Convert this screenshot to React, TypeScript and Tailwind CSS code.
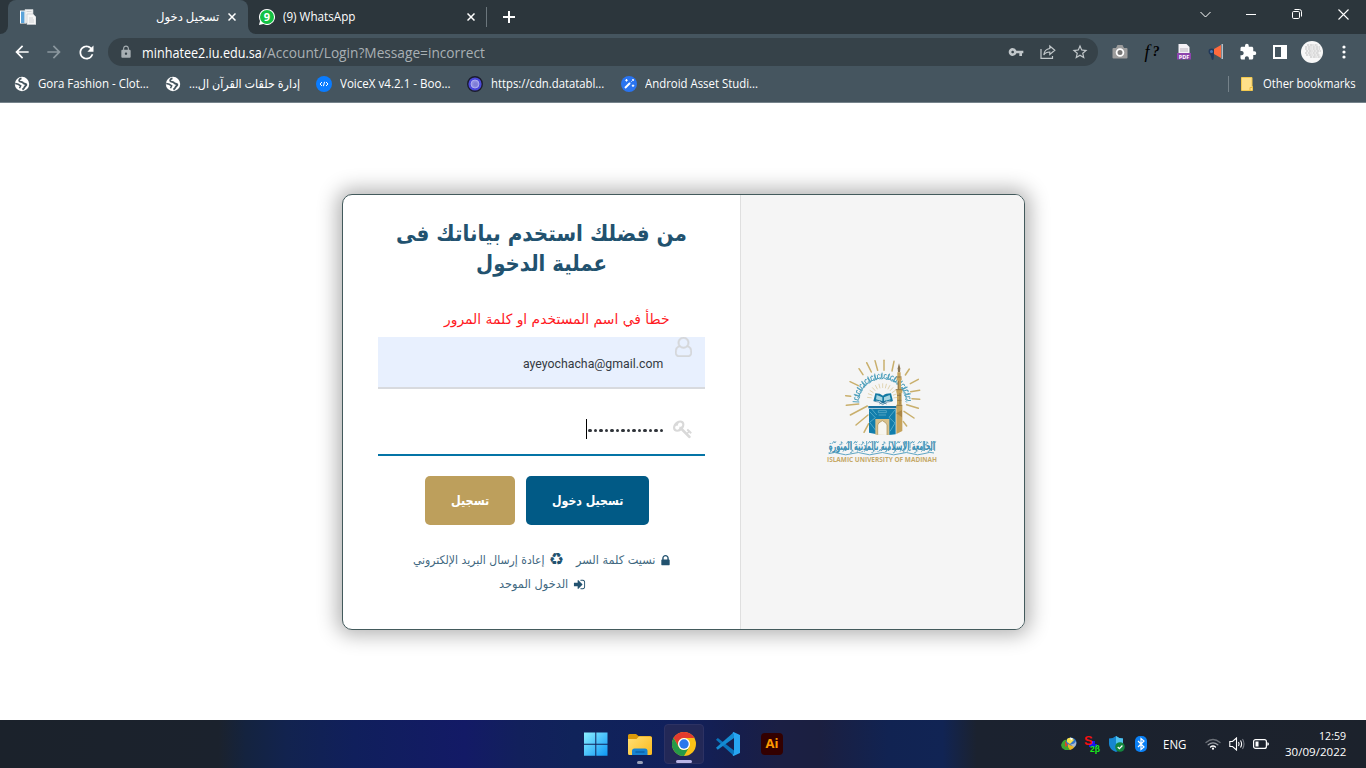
import React, { useLayoutEffect, useRef } from "react";
import { MdExtension, MdVpnKey, MdLock, MdArrowBack, MdArrowForward, MdRefresh, MdStarOutline } from "react-icons/md";

/* Single line of text condensed or widened to fill the width given in className. */
function Line({ text, className = "", rtl = false }: { text: string; className?: string; rtl?: boolean }) {
  const box = useRef<HTMLSpanElement>(null);
  const inner = useRef<HTMLSpanElement>(null);
  useLayoutEffect(() => {
    if (!box.current || !inner.current) return;
    inner.current.style.transform = `scaleX(${box.current.clientWidth / inner.current.offsetWidth})`;
  }, []);
  return (
    <span ref={box} dir="ltr" className={`flex shrink-0 whitespace-nowrap ${className}`}>
      <span ref={inner} dir={rtl ? "rtl" : "ltr"} className="inline-block shrink-0 origin-left">
        {text}
      </span>
    </span>
  );
}

function Cell({ children, className = "w-8" }: { children: React.ReactNode; className?: string }) {
  return <div className={`flex shrink-0 items-center justify-center ${className}`}>{children}</div>;
}

function CloseX({ size = 8 }: { size?: number }) {
  return (
    <svg width={size} height={size} viewBox="0 0 8 8" stroke="#fff" strokeWidth="1.5" fill="none">
      <path d="M.5.5l7 7M7.5.5l-7 7" />
    </svg>
  );
}

function TabStrip() {
  return (
    <div className="flex h-[34px] bg-[#2c363c]">
      <div className="flex w-2 items-end bg-[#45555f]">
        <div className="h-full w-2 rounded-br-lg bg-[#2c363c]" />
      </div>
      <div className="flex w-60 items-center rounded-t-lg bg-[#45555f] pl-3">
        <svg width="16" height="16" viewBox="0 0 16 16">
          <path d="M0 1.500h6v13H0z" fill="#fff" />
          <path d="M1 2.500h3.500v11.500H1z" fill="#5ba3d9" />
          <path d="M5 .5h8V14H5z" fill="#f3f3f3" stroke="#cfd3d6" strokeWidth=".6" />
          <path d="M7 5h6l3 3v7.500H7z" fill="#f7f7f7" stroke="#c3c7cb" strokeWidth=".7" />
          <path d="M9 9h4M9 11h5M9 13h5M6.500 2.500h5" stroke="#c6c9cd" strokeWidth=".8" />
        </svg>
        <Line rtl text="تسجيل دخول" className="ml-[120px] w-[63px] text-[12px] text-white" />
        <div className="ml-[9px]"><CloseX /></div>
      </div>
      <div className="flex w-2 items-end bg-[#45555f]">
        <div className="h-full w-2 rounded-bl-lg bg-[#2c363c]" />
      </div>
      <div className="flex w-[230px] items-center pl-[3px]">
        <svg width="16" height="16" viewBox="0 0 16 16">
          <path d="M8 0a8 8 0 1 1-3.7 15.1L0 16l1-4.1A8 8 0 0 1 8 0z" fill="#fff" />
          <circle cx="8" cy="8" r="7" fill="#13c143" />
          <text x="8" y="12" textAnchor="middle" fontSize="11" fontWeight="700" fill="#fff" fontFamily="Open Sans, sans-serif">9</text>
        </svg>
        <Line text="(9) WhatsApp" className="ml-2 w-[72px] text-[12px] text-white" />
        <div className="ml-[112px]"><CloseX /></div>
      </div>
      <div className="mt-[7px] h-5 w-px bg-[#6b767c]" />
      <Cell className="ml-4 w-3">
        <svg width="12" height="12" viewBox="0 0 12 12" stroke="#fff" strokeWidth="2"><path d="M6 0v12M0 6h12" /></svg>
      </Cell>
      <div className="ml-auto flex h-[28px]">
        <Cell className="w-[46px]"><svg width="11" height="7" viewBox="0 0 11 7" fill="none" stroke="#fff"><path d="M.5 1l5 5 5-5" /></svg></Cell>
        <Cell className="w-[46px]"><div className="h-px w-[10px] bg-white" /></Cell>
        <Cell className="w-[46px]">
          <svg width="10" height="10" viewBox="0 0 10 10" fill="none" stroke="#fff">
            <rect x=".5" y="2.5" width="7" height="7" rx="1.2" /><path d="M2.5.5h4.8a2.2 2.2 0 0 1 2.2 2.2v4.8" />
          </svg>
        </Cell>
        <Cell className="w-[46px]"><svg width="11" height="11" viewBox="0 0 11 11" stroke="#fff" strokeWidth="1.1"><path d="M.5.5l10 10M10.5.5l-10 10" /></svg></Cell>
      </div>
    </div>
  );
}

function Toolbar() {
  return (
    <div className="flex h-9 items-stretch bg-[#45555f] pl-1.5 text-white">
      <Cell><MdArrowBack size={20} /></Cell>
      <Cell><MdArrowForward size={20} color="#8b979e" /></Cell>
      <Cell><MdRefresh size={21} /></Cell>
      <div className="my-1 ml-1.5 flex w-[990px] items-center rounded-full bg-[#364249] pr-0.5 pl-0.5 text-[14px]">
        <Cell><MdLock size={14} color="#a7afb3" /></Cell>
        <Line text="minhatee2.iu.edu.sa" className="w-[120px] text-white" />
        <Line text="/Account/Login?Message=incorrect" className="w-[223px] text-[#a9b0b4]" />
        <div className="ml-auto flex">
          <Cell><MdVpnKey size={16} color="#c1c7ca" /></Cell>
          <Cell>
            <svg width="16" height="16" viewBox="0 0 16 16" fill="none" stroke="#c1c7ca" strokeWidth="1.2">
              <path d="M1 5v9.4h11.5V12" /><path d="M9.8 2l5 4.2-5 4.2V8C6.800 8 5 9 3.800 11c.3-3.500 2.300-6 6-6.500z" />
            </svg>
          </Cell>
          <Cell><MdStarOutline size={18} color="#c1c7ca" /></Cell>
        </div>
      </div>
      <div className="ml-1.5 flex">
        <Cell>
          <svg width="16" height="16" viewBox="0 0 16 16">
            <path d="M1.500 4H4l1.500-3h5L12 4h2.500q1 0 1 1v8.500q0 1-1 1h-13q-1 0-1-1V5q0-1 1-1z" fill="#9c9c9c" />
            <circle cx="8" cy="8.500" r="3.400" fill="#777" stroke="#fff" strokeWidth="1.800" />
          </svg>
        </Cell>
        <Cell>
          <span className="flex items-center font-['Liberation_Serif'] leading-4 text-black italic">
            <span className="text-[18px]">f</span>
            <span className="pl-[3px] text-[14px] font-bold">?</span>
          </span>
        </Cell>
        <Cell>
          <svg width="16" height="16" viewBox="0 0 16 16">
            <path d="M2.500 0h8l3 3v7h-11z" fill="#f4f1f6" /><path d="M4 5h8M4 7h8" stroke="#b9b3bd" />
            <path d="M1 9h14v6.500H1z" fill="#8e44ad" />
            <text x="8" y="14.500" fontSize="5.500" fontWeight="700" fill="#fff" textAnchor="middle" fontFamily="Open Sans, sans-serif">PDF</text>
          </svg>
        </Cell>
        <Cell>
          <svg width="16" height="16" viewBox="0 0 16 16">
            <path d="M1 5.500Q3 4 6 5v6l-.5 4.500L4 16l-1.500-5Q-.5 9 1 5.500z" fill="#22395b" /><path d="M6 5l7-4v13l-7-4z" fill="#ff6a3d" />
            <path d="M14.200 0v15" stroke="#d5dce4" strokeWidth="1.200" /><circle cx="3.500" cy="7.500" r="1.500" fill="#4b79b8" />
          </svg>
        </Cell>
        <Cell><MdExtension size={18} /></Cell>
        <Cell><svg width="14" height="14" viewBox="0 0 14 14"><path fill="#fff" fillRule="evenodd" d="M0 0h14v14H0zM2 2v10h6V2z" /></svg></Cell>
        <Cell>
          <svg width="22" height="22" viewBox="0 0 22 22">
            <circle cx="11" cy="11" r="11" fill="#f7f7f7" />
            <g stroke="#bdbdbd" strokeDasharray="2 .7 3 .6 1 .5"><path d="M6 4h11M4 6h15M4 8h15M5 10h15M4 12h14M5 14h14M9 16h11" /></g>
          </svg>
        </Cell>
        <Cell><svg width="4" height="14" viewBox="0 0 4 14" fill="#fff"><circle cx="2" cy="2" r="1.600" /><circle cx="2" cy="7" r="1.600" /><circle cx="2" cy="12" r="1.600" /></svg></Cell>
      </div>
    </div>
  );
}

function Globe() {
  return (
    <svg width="16" height="16" viewBox="0 0 16 16" className="shrink-0">
      <circle cx="8" cy="8" r="7.200" fill="#fff" />
      <path d="M7.500 2.300C5.500 2.800 5 4 5.300 5c.5 1.300 3.200.4 3.700 1.800.3 1 2.500.8 3.300 1.600.6 1-1.300 1.700-1.700 2.600-.4 1-1 1.800-2.200 2.600" fill="none" stroke="#45555f" strokeWidth="1.900" />
      <path d="M1.200 7.500l3 .8 2.500 1.500-1.200 2.500" fill="none" stroke="#45555f" strokeWidth="1.500" />
    </svg>
  );
}

function Bookmarks() {
  return (
    <div className="flex h-[33px] items-center border-b border-[#76838b] bg-[#45555f] pr-[10px] pb-1 pl-[14px] text-[12px] text-white">
      <Globe />
      <Line text="Gora Fashion - Clot..." className="ml-2 w-[111px]" />
      <div className="ml-4"><Globe /></div>
      <Line rtl text="إدارة حلقات القرآن ال..." className="ml-2 w-[111px]" />
      <svg width="16" height="16" viewBox="0 0 16 16" className="ml-4 shrink-0">
        <circle cx="8" cy="8" r="8" fill="#0a7cff" /><path d="M6 6L4 8l2 2M10 6l2 2-2 2M8.600 5.800l-1.200 4.400" fill="none" stroke="#fff" strokeWidth="1" />
      </svg>
      <Line text="VoiceX v4.2.1 - Boo..." className="ml-2 w-[111px]" />
      <svg width="16" height="16" viewBox="0 0 16 16" className="ml-4 shrink-0">
        <circle cx="8" cy="8" r="7.300" fill="#4b49d8" stroke="#1b1c2e" strokeWidth="1.400" />
        <circle cx="8" cy="8" r="4" fill="#8f8ee0" stroke="#b9b8f2" strokeWidth=".8" /><circle cx="8.500" cy="8.500" r="2.200" fill="#7f7dd6" />
      </svg>
      <Line text="https://cdn.datatabl..." className="ml-2 w-[113px]" />
      <svg width="16" height="16" viewBox="0 0 16 16" className="ml-[17px] shrink-0">
        <circle cx="8" cy="8" r="8" fill="#2a74f0" /><path d="M4 12l5-5" stroke="#fff" strokeWidth="2" />
        <path d="M9.800 6.200l.8-.8M5.500 3v2.600M4.200 4.300h2.600M12 8.500V11M10.800 9.700h2.500M12 3v2M11 4h2" stroke="#fff" strokeWidth="1" />
      </svg>
      <Line text="Android Asset Studi..." className="ml-2 w-[113px]" />
      <div className="ml-auto h-4 w-px bg-[#75828a]" />
      <svg width="12" height="14" viewBox="0 0 12 14" className="ml-3 shrink-0">
        <path d="M.5.5h10.500v9h.5v4H.5z" fill="#ffe08a" stroke="#f3c94e" /><path d="M9 13.500v-3h2.500" fill="none" stroke="#eab93c" />
      </svg>
      <Line text="Other bookmarks" className="ml-[10px] w-[93px]" />
    </div>
  );
}

const rays = [
  [107, 152, 122, 154], [120, 110, 145, 122], [147, 71, 159, 89], [170, 53, 184, 81], [195, 47, 203, 76], [222, 46, 222, 76], [252, 49, 246, 78],
  [298, 72, 286, 90], [325, 103, 301, 116], [329, 136, 302, 140], [329, 163, 306, 161], [325, 190, 290, 179], [312, 219, 282, 199],
  [290, 243, 280, 230], [109, 181, 146, 177], [121, 210, 172, 183], [138, 240, 174, 210], [162, 262, 176, 236],
];

function UniversityLogo() {
  const arc = Array.from({ length: 36 }, (_, i) => 184 + i * 4.9);
  const inner = Array.from({ length: 13 }, (_, i) => 186 + i * 14);
  return (
    <svg width="145" height="130" viewBox="0 0 435 390" fill="none" className="overflow-visible">
      <g stroke="#c9af6c" strokeWidth="4.500" strokeLinecap="round">
        {rays.map(([x1, y1, x2, y2], i) => <path key={i} d={`M${x1} ${y1}L${x2} ${y2}`} />)}
      </g>
      {arc.map((a, i) => (
        <g key={a} transform={`translate(217 172) rotate(${a + 90}) translate(0 -78)`} stroke="#4a9dba" strokeWidth="2.800">
          <path d={i % 3 === 0 ? "M-4 9V-11M-1 7q5-4 4-13" : i % 3 === 1 ? "M-5 4q5 6 9-2M-3-4q4-6 6 0" : "M-4 9q7-4 5-17M2 8l4-3"} />
        </g>
      ))}
      <g stroke="#d9c99d" strokeWidth="2.200">
        {inner.map((a) => <path key={a} transform={`translate(218 162) rotate(${a})`} d="M33 0H47" />)}
      </g>
      <path d="M196 145q15 0 23 7 8-7 24-7l6 24q-20-5-30 7-9-12-29-7z" fill="#147aa3" />
      <path d="M200 150l17 7v12l-19-6zM239 150l-17 7v12l20-6z" fill="#a7d5e1" />
      <path d="M193 169q14-1 25 10 12-11 28-10M208 177l20-10M230 177l-20-10" stroke="#286a91" strokeWidth="2" />
      <path d="M175 183h85v7h-85z" fill="#176f9e" />
      <path d="M177 192h80v76q-38 5-80-5z" fill="#117dab" />
      <path d="M179 200l17 18-17 14 18 24M185 192l15 18M255 195l-18 22 18 17-15 25" stroke="#52a9c8" strokeWidth="3" />
      <path d="M205 197h24v6h-24zM206 210h22" stroke="#70b8cf" strokeWidth="2" />
      <path d="M196 269v-47h42v48" fill="#d9c18a" />
      <path d="M203 269v-29q0-6 14-13 14 7 14 13v30z" fill="#f8f6ef" />
      <path d="M203 269v-29q0-6 14-13 14 7 14 13v30" stroke="#a88c50" strokeWidth="2" />
      <path d="M267 55l4 15-1 12h-6l-1-12z" fill="#8b7551" />
      <path d="M262 82h10v16h3v8h-2v28h4v9h-2v39h2v76l-18 9v-85h2v-39h-2v-9h4v-28h-3v-8h2z" fill="#c5a25a" />
      <path d="M259 96h16M257 134h20M259 181h18M265 108v24M270 144v34M261 151h12M262 166h12" stroke="#937847" strokeWidth="3" />
      <path d="M259 205l17-10v22z" fill="#aa8645" />
      <g transform="translate(0 320) scale(1 1.350)">
        <text x="56" y="-3" textLength="319" lengthAdjust="spacingAndGlyphs" direction="rtl" textAnchor="end" fontSize="27" fontWeight="700" fill="#3c8fb4" fontFamily="DejaVu Sans, sans-serif">الجامعة الإسلامية بالمدينة المنورة</text>
      </g>
      <g stroke="#559fbe" strokeWidth="2.800">
        {Array.from({ length: 30 }, (_, i) => <path key={i} transform={`translate(${56 + i * 10.700} ${i % 2 ? 291 : 315})`} d={i % 3 ? "M0 5l5-7 3 5 3-5" : "M0 8q7 2 6-9l4 5"} />)}
        <path d="M56 326q18-7 34 0t36 0 36 0 36 0 36 0 36 0 36 0 36 0 30-2M374 290v28M340 288v26M284 288v28M300 290v20M238 288v26M170 288v26M124 290v22" />
      </g>
      <text x="51" y="352" textLength="330" lengthAdjust="spacingAndGlyphs" fontSize="18.500" fontWeight="700" fill="#c6a968" fontFamily="Open Sans, sans-serif">ISLAMIC UNIVERSITY OF MADINAH</text>
    </svg>
  );
}

function LoginCard() {
  return (
    <div className="ml-[342px] flex h-[436px] w-[683px] overflow-hidden rounded-[10px] border border-[#435a5c] bg-white font-['DejaVu_Sans',sans-serif] shadow-[0_0_20px_5px_rgba(0,0,0,0.3)]">
      <div className="flex w-[397px] flex-col items-center pt-[24px]">
        <h1 className="flex flex-col items-center text-[22px] leading-[30px] font-bold text-[#22526f]">
          <Line rtl text="من فضلك استخدم بياناتك فى" className="w-[291px]" />
          <Line rtl text="عملية الدخول" className="w-[131px]" />
        </h1>
        <Line rtl text="خطأ في اسم المستخدم او كلمة المرور" className="mt-[29px] ml-[29px] w-[225px] text-[14px] leading-[22px] text-[#ff1a1f]" />
        <div className="mt-[7px] flex h-[52px] w-[327px] justify-end border-b-2 border-[#d8dade] bg-[#e8f0fe] pr-[13px]">
          <Line text="ayeyochacha@gmail.com" className="mt-[16px] w-[140px] font-['Roboto',sans-serif] text-[13px] leading-[21px] text-[#343a42]" />
          <svg width="17" height="20" viewBox="0 0 1536 1792" className="ml-[12px] shrink-0" fill="#d5d7da" stroke="#d5d7da" strokeWidth="50">
            <path d="M1201 784q47 14 89.500 38t89 73 79.500 115.500 55 172 22 236.500q0 154-100 263.500t-241 109.500h-854q-141 0-241-109.500t-100-263.500q0-131 22-236.500t55-172 79.500-115.500 89-73 89.500-38q-79-125-79-272 0-104 40.500-198.500t109.500-163.500 163.500-109.500 198.500-40.500 198.500 40.500 163.500 109.500 109.500 163.500 40.500 198.500q0 147-79 272zm-433-656q-159 0-271.500 112.500t-112.500 271.500 112.500 271.500 271.500 112.500 271.500-112.500 112.500-271.500-112.500-271.500-271.500-112.500zm427 1536q88 0 150.500-71.500t62.500-173.500q0-239-78.500-377t-225.500-145q-145 127-336 127t-336-127q-147 7-225.500 145t-78.500 377q0 102 62.500 173.500t150.500 71.500h854z" />
          </svg>
        </div>
        <div className="mt-[15px] flex h-[52px] w-[327px] items-center justify-end border-b-2 border-[#0474a6] pr-[12px]">
          <div className="flex items-center">
            <span className="h-5 w-px bg-black" />
            <span className="flex gap-[2px] pt-[3px] pl-px">
              {Array.from({ length: 14 }, (_, i) => <span key={i} className="h-[3.500px] w-[3.500px] rounded-full bg-[#30343a]" />)}
            </span>
          </div>
          <svg width="20" height="20" viewBox="0 0 1792 1792" className="ml-[10px] shrink-0" fill="#d9d9d9">
            <path d="M832 512q0-80-56-136t-136-56-136 56-56 136q0 42 19 83-41-19-83-19-80 0-136 56t-56 136 56 136 136 56 136-56 56-136q0-42-19-83 41 19 83 19 80 0 136-56t56-136zm851 704q0 17-49 66t-66 49q-9 0-28.500-16t-36.500-33-38.500-40-24.500-26l-96 96 220 220q28 28 28 68 0 42-39 81t-81 39q-40 0-68-28l-671-671q-176 131-365 131-163 0-265.500-102.500t-102.500-265.500q0-160 95-313t248-248 313-95q163 0 265.500 102.500t102.500 265.500q0 189-131 365l355 355 96-96q-3-3-26-24.500t-40-38.500-33-36.500-16-28.500q0-17 49-66t66-49q13 0 23 10 6 6 46 44.500t82 79.500 86.500 86 73 78 28.500 41z" />
          </svg>
        </div>
        <div className="mt-5 mr-[9px] flex h-[49px] gap-[11px] text-[13px] font-bold text-white">
          <button className="flex w-[90px] items-center justify-center rounded-[5px] bg-[#bd9f5c]"><Line rtl text="تسجيل" className="w-[38px]" /></button>
          <button className="flex w-[123px] items-center justify-center rounded-[5px] bg-[#015a86]"><Line rtl text="تسجيل دخول" className="w-[71px]" /></button>
        </div>
        <div className="mt-[23px] flex h-6 items-center pl-[2px] text-[12px] text-[#3f687f]">
          <Line rtl text="إعادة إرسال البريد الإلكتروني" className="w-[132px]" />
          <span className="ml-[5px] flex w-[13px] justify-center pb-px text-[17px] leading-none text-[#22526f]">♻</span>
          <Line rtl text="نسيت كلمة السر" className="ml-[13px] w-[79px]" />
          <svg width="13" height="13" viewBox="0 0 1792 1792" className="ml-[4px]" fill="#22526f"><path d="M640 768h512v-192q0-106-75-181t-181-75-181 75-75 181v192zm832 96v576q0 40-28 68t-68 28h-960q-40 0-68-28t-28-68v-576q0-40 28-68t68-28h32v-192q0-184 132-316t316-132 316 132 132 316v192h32q40 0 68 28t28 68z" /></svg>
        </div>
        <div className="flex h-6 items-center pl-px text-[12px] text-[#3f687f]">
          <Line rtl text="الدخول الموحد" className="w-[69px]" />
          <svg width="13" height="13" viewBox="0 0 1792 1792" className="ml-[5px]" fill="#22526f"><path d="M1312 896q0 26-19 45l-544 544q-19 19-45 19t-45-19-19-45v-288h-448q-26 0-45-19t-19-45v-384q0-26 19-45t45-19h448v-288q0-26 19-45t45-19 45 19l544 544q19 19 19 45zm352-352v704q0 119-84.500 203.500t-203.500 84.500h-320q-13 0-22.500-9.500t-9.500-22.500q0-4-1-20t-.5-26.500 3-23.500 10-19.500 20.500-6.500h320q66 0 113-47t47-113v-704q0-66-47-113t-113-47h-312l-11.500-1-11.500-3-8-5.500-7-9-2-13.500q0-4-1-20t-.5-26.500 3-23.500 10-19.500 20.500-6.500h320q119 0 203.500 84.500t84.500 203.500z" /></svg>
        </div>
      </div>
      <div className="flex flex-1 items-start justify-center border-l border-[#dfdfdf] bg-[#f5f5f5] pt-[150px]">
        <UniversityLogo />
      </div>
    </div>
  );
}

function Taskbar() {
  return (
    <div className="flex h-12 items-center bg-[linear-gradient(90deg,#1b222b_0%,#1b222d_16%,#14233f_18%,#12234f_21%,#101f5c_26%,#131a66_34%,#12205c_38%,#10235a_42%,#11205c_50%,#161e4c_54%,#1b1f44_57%,#1b1f40_60%,#112352_65%,#112454_69%,#1b222f_71.500%,#1c222c_100%)] text-white">
      <div className="ml-[574px] flex h-full">
        <Cell className="w-11">
          <svg width="24" height="24" viewBox="0 0 24 24">
            <defs><linearGradient id="win" x1="0" y1="0" x2="24" y2="24" gradientUnits="userSpaceOnUse"><stop stopColor="#8df0ff" /><stop offset="1" stopColor="#0b95f5" /></linearGradient></defs>
            <path d="M0 .5h11.300v11.200H0zM12.300.5h11.200v11.200H12.300zM0 12.700h11.300v11H0zM12.300 12.700h11.200v11H12.300z" fill="url(#win)" />
          </svg>
        </Cell>
        <Cell className="w-11 flex-col pt-[10px]">
          <svg width="24" height="22" viewBox="0 0 24 22">
            <defs><linearGradient id="fold" x1="0" y1="0" x2="24" y2="22" gradientUnits="userSpaceOnUse"><stop stopColor="#ffe27a" /><stop offset="1" stopColor="#fcb91c" /></linearGradient></defs>
            <path d="M0 1.500Q0 0 1.500 0H8l2.500 2H22q2 0 2 2v2H0z" fill="#dc9a0a" />
            <path d="M0 5h8.500l2.500-2.500h11q2 0 2 1.500v15.500q0 1.500-1.500 1.500h-21Q0 21 0 19.500z" fill="url(#fold)" />
            <path d="M4 21v-4q0-2.500 2.500-2.500h10.500q2.500 0 2.500 2.500v4z" fill="#1783d2" /><path d="M8 18h8" stroke="#0d63a8" strokeWidth="1.500" strokeLinecap="round" />
          </svg>
          <div className="mt-[5px] h-[3px] w-[6px] rounded-full bg-[#98a0b8]" />
        </Cell>
        <div className="mx-[2px] mt-1 flex h-10 w-10 flex-col items-center rounded border border-[#2d3263] bg-[#232857] pt-[7px]">
          <svg width="24" height="24" viewBox="0 0 24 24">
            <circle cx="12" cy="12" r="12" fill="#fbc116" />
            <path d="M1.600 6A12 12 0 0 1 22.400 6H12a6 6 0 0 0-5.200 9z" fill="#e33b2e" />
            <path d="M1.600 6A12 12 0 0 0 12 24l5.200-9A6 6 0 0 1 6.800 15z" fill="#269a48" />
            <circle cx="12" cy="12" r="6" fill="#fff" /><circle cx="12" cy="12" r="4.700" fill="#2b78ec" />
          </svg>
          <div className="mt-[4px] h-[3px] w-4 rounded-full bg-[#b9b4e6]" />
        </div>
        <Cell className="w-11">
          <svg width="24" height="24" viewBox="0 0 24 24">
            <path d="M0 7.800L1.800 6 18 18.500V24z" fill="#0a74bd" /><path d="M0 15.700l1.700 2.100L18 6V0z" fill="#148bd2" />
            <path d="M17.500 0L24 3v18l-6.500 3-1-1 1.500-1.500v-19L16.500 1z" fill="#27a5f1" />
          </svg>
        </Cell>
        <Cell className="w-11">
          <div className="flex h-[22px] w-[22px] items-center justify-center rounded bg-[#330000] pb-0.5 font-['Open_Sans'] text-[13px] leading-none font-bold text-[#ff9a00]">Ai</div>
        </Cell>
      </div>
      <div className="ml-auto flex items-center">
        <Cell className="w-6">
          <svg width="16" height="14" viewBox="0 0 16 14">
            <circle cx="10" cy="6" r="5.500" fill="#3477c9" /><path d="M6 2q4-3 7 1l-4 4-3-2z" fill="#f6e04b" /><path d="M9 .5l3 1-2 2z" fill="#fff" />
            <path d="M0 8q2-6 6-5l-2 3 1 3 6 0-2 4-5 0-3-2z" fill="#3da52f" /><path d="M4 4l3 4-3 2z" fill="#d74727" /><path d="M7 7q4 3 7 1-1 4-5 5l-2-3z" fill="#eab321" />
            <path d="M9 7q4 1 6-3 1 4-2 6z" fill="#aeb8c6" />
          </svg>
        </Cell>
        <Cell className="w-6">
          <svg width="18" height="18" viewBox="0 0 18 18" className="overflow-visible">
            <path d="M8 6h3v3h2v3H5V9h3z" fill="#1419e8" />
            <text x="0" y="10" fontSize="13" fontWeight="700" fill="#f51010" fontFamily="Liberation Sans, sans-serif">S</text>
            <text x="6" y="17" fontSize="8.500" fontWeight="700" fill="#18ef18" fontFamily="Liberation Sans, sans-serif">2β</text>
          </svg>
        </Cell>
        <Cell className="w-6">
          <svg width="16" height="16" viewBox="0 0 16 16">
            <path d="M7 0q3 2.500 7 2.500V8q0 5-7 8-7-3-7-8V2.500Q4 2.500 7 0z" fill="#1686d0" /><path d="M7 0q3 2.500 7 2.500V8H7z" fill="#4fc3ef" />
            <circle cx="11" cy="11" r="4.800" fill="#13853e" /><path d="M8.700 11l1.700 1.700 3-3.200" fill="none" stroke="#fff" strokeWidth="1.200" />
          </svg>
        </Cell>
        <Cell className="w-6">
          <svg width="12" height="16" viewBox="0 0 12 16"><rect width="12" height="16" rx="5" fill="#0a80f5" /><path d="M3 5l6 6-3 2.500v-11L9 5l-6 6" fill="none" stroke="#fff" strokeWidth="1.200" /></svg>
        </Cell>
        <Line text="ENG" className="ml-[10px] w-[23px] pt-px text-[12px]" />
        <Cell className="ml-[15px] w-6">
          <svg width="16" height="12" viewBox="0 0 16 12" fill="none" strokeWidth="1.300" strokeLinecap="round">
            <path d="M1 4.500q7-6 14 0" stroke="#6c7178" /><path d="M3.200 6.800q4.800-4 9.600 0" stroke="#9a9ea4" /><path d="M5.500 9q2.500-2 5 0" stroke="#fff" /><circle cx="8" cy="10.700" r="1.100" fill="#fff" />
          </svg>
        </Cell>
        <Cell className="w-6">
          <svg width="16" height="14" viewBox="0 0 16 14" fill="none" stroke="#fff" strokeWidth="1.100">
            <path d="M.8 4.500h2.700L7.500 1v12L3.500 9.500H.8z" /><path d="M9.500 5q1.200 2 0 4M11.500 3.500q2.200 3.500 0 7" /><path d="M13.500 2q3 5 0 10" stroke="#777c84" />
          </svg>
        </Cell>
        <Cell className="w-6">
          <svg width="16" height="10" viewBox="0 0 16 10"><rect x=".6" y=".6" width="12.800" height="8.800" rx="2" fill="none" stroke="#fff" strokeWidth="1.200" /><path d="M2.500 2.500h3v5h-3zM14.300 3.200q1.700 0 1.700 1.800t-1.700 1.800z" fill="#fff" /></svg>
        </Cell>
        <div className="mr-5 ml-3 flex w-[61px] flex-col items-end text-[11px] leading-4">
          <Line text="12:59" className="w-[27px]" />
          <Line text="30/09/2022" className="w-[61px]" />
        </div>
      </div>
    </div>
  );
}

export default function App() {
  return (
    <div className="flex h-[768px] w-[1366px] flex-col overflow-hidden bg-white font-['Open_Sans','DejaVu_Sans',sans-serif]">
      <TabStrip />
      <Toolbar />
      <Bookmarks />
      <main className="flex-1 pt-[91px]">
        <LoginCard />
      </main>
      <Taskbar />
    </div>
  );
}
